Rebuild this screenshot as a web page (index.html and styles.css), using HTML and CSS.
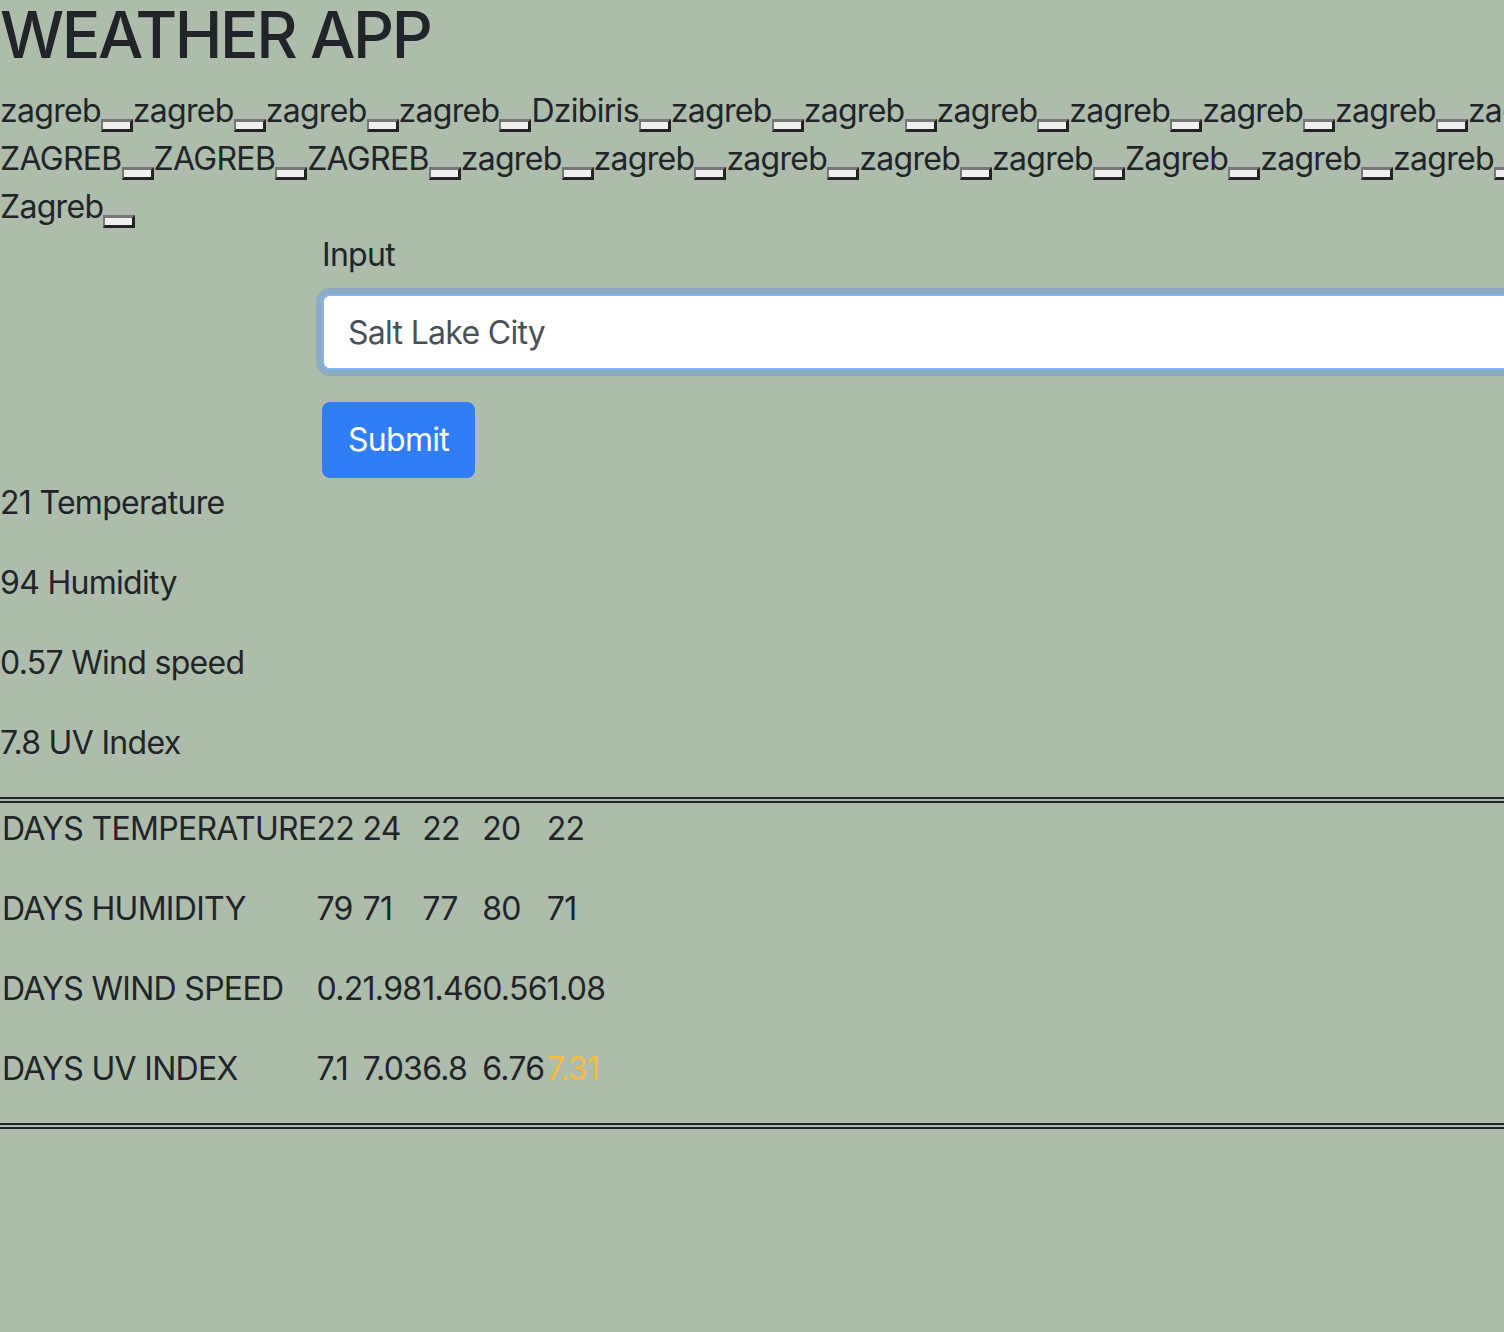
FILE: index.html
```html
<!DOCTYPE html>
<html lang="en">
<head>
<meta charset="utf-8">
<title>Weather App</title>
<link rel="stylesheet" href="styles.css">
</head>
<body>
<h1 class="title">WEATHER APP</h1>
<div class="history">
  <div class="history-line">zagreb<button class="chip" type="button"></button>zagreb<button class="chip" type="button"></button>zagreb<button class="chip" type="button"></button>zagreb<button class="chip" type="button"></button>Dzibiris<button class="chip" type="button"></button>zagreb<button class="chip" type="button"></button>zagreb<button class="chip" type="button"></button>zagreb<button class="chip" type="button"></button>zagreb<button class="chip" type="button"></button>zagreb<button class="chip" type="button"></button>zagreb<button class="chip" type="button"></button>zagreb<button class="chip" type="button"></button>zagreb<button class="chip" type="button"></button></div>
  <div class="history-line">ZAGREB<button class="chip" type="button"></button>ZAGREB<button class="chip" type="button"></button>ZAGREB<button class="chip" type="button"></button>zagreb<button class="chip" type="button"></button>zagreb<button class="chip" type="button"></button>zagreb<button class="chip" type="button"></button>zagreb<button class="chip" type="button"></button>zagreb<button class="chip" type="button"></button>Zagreb<button class="chip" type="button"></button>zagreb<button class="chip" type="button"></button>zagreb<button class="chip" type="button"></button>zagreb<button class="chip" type="button"></button></div>
  <div class="history-line">Zagreb<button class="chip" type="button"></button></div>
</div>
<form class="search">
  <label class="search-label" for="city">Input</label>
  <input class="search-input" id="city" type="text" value="Salt Lake City">
  <button class="search-btn" type="button">Submit</button>
</form>
<div class="current">
  <p class="stat">21 Temperature</p>
  <p class="stat">94 Humidity</p>
  <p class="stat">0.57 Wind speed</p>
  <p class="stat">7.8 UV Index</p>
</div>
<div class="forecast">
  <table class="days">
    <tr><td class="lbl">DAYS TEMPERATURE</td><td>22</td><td>24</td><td>22</td><td>20</td><td>22</td></tr>
    <tr><td class="lbl">DAYS HUMIDITY</td><td>79</td><td>71</td><td>77</td><td>80</td><td>71</td></tr>
    <tr><td class="lbl">DAYS WIND SPEED</td><td>0.2</td><td>1.98</td><td>1.46</td><td>0.56</td><td>1.08</td></tr>
    <tr><td class="lbl">DAYS UV INDEX</td><td>7.1</td><td>7.03</td><td>6.8</td><td>6.76</td><td class="warn">7.31</td></tr>
  </table>
</div>
</body>
</html>
```
FILE: styles.css
```css
html, body {
  margin: 0;
  padding: 0;
  overflow: hidden;
}
body {
  background: #adbcab;
  color: #212529;
  font-family: Inter, "Noto Sans", "Liberation Sans", sans-serif;
  font-size: 32px;
  line-height: 48px;
  letter-spacing: -0.7px;
  width: 1504px;
  height: 1332px;
}
.title {
  margin: 0 0 16px;
  font-size: 64px;
  line-height: 70px;
  font-weight: 500;
  letter-spacing: -2.4px;
}
.history-line {
  white-space: nowrap;
  height: 48px;
  padding-top: 1px;
  box-sizing: border-box;
}
.chip {
  display: inline-block;
  box-sizing: border-box;
  width: 32px;
  height: 13px;
  padding: 0;
  margin: 0;
  vertical-align: -7px;
  background: #efefef;
  border-style: solid;
  border-width: 3px 3px 3px 2px;
  border-color: #777 #222 #222 #777;
}
.search {
  padding-left: 322px;
  margin: 0;
}
.search-label {
  display: block;
  margin-bottom: 16px;
  padding-top: 1px;
  height: 48px;
  box-sizing: border-box;
}
.search-input {
  display: block;
  box-sizing: border-box;
  width: 1400px;
  height: 76px;
  margin: 0 0 32px;
  padding: 12px 24px;
  font: inherit;
  letter-spacing: inherit;
  color: #495057;
  background: #fff;
  border: 2px solid #84b5f5;
  border-radius: 8px;
  box-shadow: 0 0 0 6px #8eaac4;
  outline: none;
}
.search-btn {
  display: block;
  box-sizing: border-box;
  height: 76px;
  padding: 12px 24px;
  font: inherit;
  letter-spacing: inherit;
  color: #fff;
  background: #2f7ef6;
  border: 2px solid #2f7ef6;
  border-radius: 8px;
  margin: 0;
}
.stat {
  margin: 0 0 32px;
  padding-top: 1px;
  height: 48px;
  box-sizing: border-box;
}
.forecast {
  border-top: 6px double #212529;
  border-bottom: 6px double #212529;
  margin-top: -1px;
}
.days {
  border-collapse: collapse;
}
.days td {
  padding: 2px 0 30px;
  vertical-align: top;
  white-space: nowrap;
}
.days td.lbl {
  padding-left: 2px;
}
.days td.warn {
  color: #f5bd3b;
}
```
